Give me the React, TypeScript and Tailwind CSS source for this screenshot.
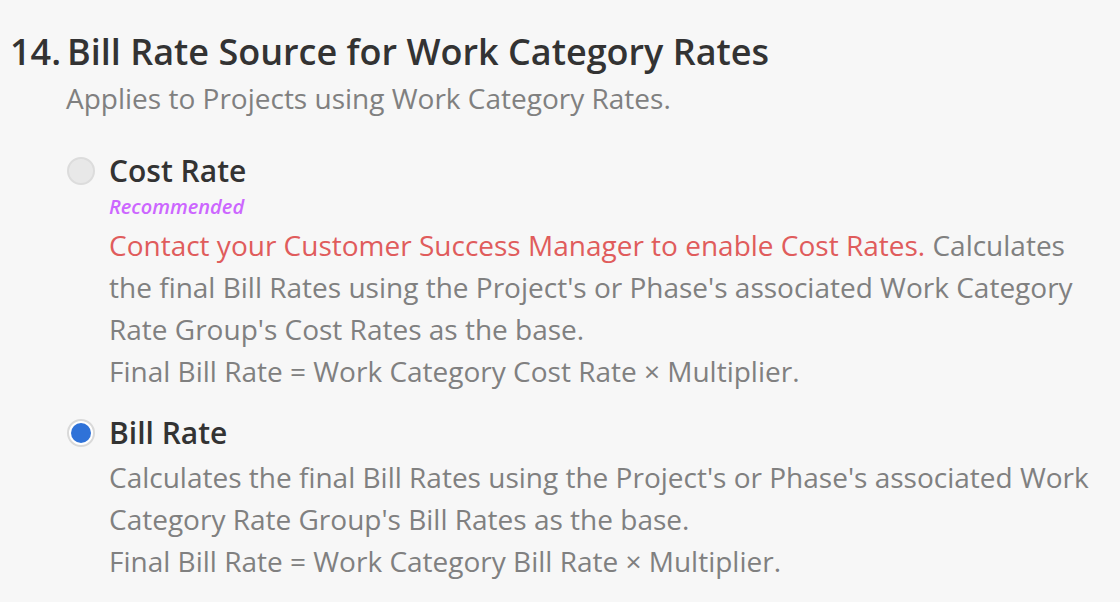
import * as React from 'react';

const Radio = ({ checked }: { checked: boolean }) => {
  if (checked) {
    return (
      <div className="w-[28px] h-[28px] rounded-full border-2 border-[#d9d9d9] bg-white flex items-center justify-center shrink-0">
        <div className="w-[20px] h-[20px] rounded-full bg-[#2f72d8]" />
      </div>
    );
  }
  return <div className="w-[28px] h-[28px] rounded-full border-2 border-[#dcdcdc] bg-[#e8e8e8] shrink-0" />;
};

const App = () => {
  return (
    <div className="min-h-[602px] w-[1120px] bg-[#f7f7f7] text-[#333] pt-[30px] pr-[20px]" style={{ fontFamily: '"Open Sans", sans-serif' }}>
      <div className="flex items-baseline text-[36px] font-semibold leading-[44px] text-[#333]">
        <span className="w-[67px] pl-[10px] shrink-0">14.</span>
        <span>Bill Rate Source for Work Category Rates</span>
      </div>
      <div className="pl-[66px] text-[28px] leading-[36px] text-[#808080] mt-[6px]">Applies to Projects using Work Category Rates.</div>

      <div className="pl-[67px] mt-[35px] flex flex-col gap-[21px]">
        <div className="flex gap-[14px]">
          <div className="pt-[6px]">
            <Radio checked={false} />
          </div>
          <div className="flex flex-col">
            <div className="text-[30px] font-semibold leading-[40px] text-[#333]">Cost Rate</div>
            <div className="text-[20px] italic font-semibold leading-[26px] text-[#cc66ff] mt-[3px]">Recommended</div>
            <div className="text-[28px] leading-[42px] text-[#808080] mt-[4px]">
              <span className="text-[#e05c5c]">Contact your Customer Success Manager to enable Cost Rates.</span> Calculates the final Bill Rates using the
              Project's or Phase's associated Work Category Rate Group's Cost Rates as the base.
              <br />
              Final Bill Rate = Work Category Cost Rate × Multiplier.
            </div>
          </div>
        </div>

        <div className="flex gap-[14px]">
          <div className="pt-[6px]">
            <Radio checked={true} />
          </div>
          <div className="flex flex-col">
            <div className="text-[30px] font-semibold leading-[40px] text-[#333]">Bill Rate</div>
            <div className="text-[28px] leading-[42px] text-[#808080] mt-[3px]">
              Calculates the final Bill Rates using the Project's or Phase's associated Work Category Rate Group's Bill Rates as the base.
              <br />
              Final Bill Rate = Work Category Bill Rate × Multiplier.
            </div>
          </div>
        </div>
      </div>
    </div>
  );
};

export default App;
